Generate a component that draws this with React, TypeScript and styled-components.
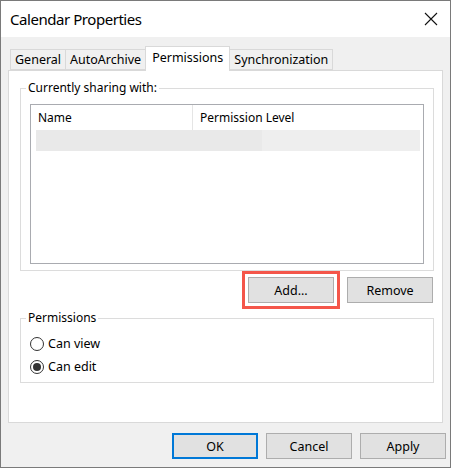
import React from "react";
import styled, { createGlobalStyle } from "styled-components";

const GlobalStyle = createGlobalStyle`
  html, body { margin: 0; padding: 0; background: #ffffff; }
  body { font-family: "Noto Sans", "Segoe UI", sans-serif; font-size: 12px; color: #000; }
  * { box-sizing: border-box; }
`;

const Window = styled.div`
  width: 451px;
  height: 468px;
  border: 1px solid #7a7a7a;
  background: #f0f0f0;
  display: flex;
  flex-direction: column;
`;

const TitleBar = styled.div`
  height: 36px;
  background: #ffffff;
  display: flex;
  align-items: center;
  justify-content: space-between;
  padding: 0 12px 0 9px;
`;

const Title = styled.div`
  font-size: 15px;
  color: #000;
  letter-spacing: -0.45px;
`;

const CloseButton = styled.div`
  width: 14px;
  height: 14px;
  display: flex;
  svg { display: block; }
`;

const Content = styled.div`
  padding: 9px 7px 0 7px;
  display: flex;
  flex-direction: column;
`;

const TabStrip = styled.div`
  display: flex;
  align-items: flex-end;
  padding-left: 2px;
  height: 24px;
  position: relative;
  z-index: 1;
`;

const Tab = styled.div<{ $active?: boolean }>`
  height: ${(p) => (p.$active ? "25px" : "21px")};
  margin-bottom: ${(p) => (p.$active ? "-1px" : "0")};
  padding: ${(p) => (p.$active ? "0 6px 3px" : "0 4px")};
  background: ${(p) => (p.$active ? "#ffffff" : "#f0f0f0")};
  border: 1px solid #d9d9d9;
  border-bottom: ${(p) => (p.$active ? "none" : "1px solid #d9d9d9")};
  margin-right: -1px;
  display: flex;
  align-items: center;
  font-size: 12.5px;
  white-space: nowrap;
`;

const Panel = styled.div`
  background: #ffffff;
  border: 1px solid #d9d9d9;
  height: 353px;
  padding: 9px 8px 0 11px;
  display: flex;
  flex-direction: column;
`;

const Group = styled.fieldset<{ $pt: number; $pb: number }>`
  margin: 0;
  border: 1px solid #dcdcdc;
  padding: ${(p) => p.$pt}px 9px ${(p) => p.$pb}px 9px;
  min-width: 0;
`;

const Legend = styled.legend`
  margin-left: -4px;
  padding: 0 2px;
  font-size: 12px;
  line-height: 16px;
`;

const ListBox = styled.div`
  height: 160px;
  border: 1px solid #a9abb0;
  background: #ffffff;
  display: flex;
  flex-direction: column;
`;

const HeaderRow = styled.div`
  display: grid;
  grid-template-columns: 162px 1fr;
  height: 25px;
  margin-right: 3px;
`;

const HeaderCell = styled.div<{ $divider?: boolean }>`
  display: flex;
  align-items: center;
  padding-left: 7px;
  border-right: ${(p) => (p.$divider ? "1px solid #e5e5e5" : "none")};
  font-size: 12px;
`;

const DataRow = styled.div`
  height: 21px;
  margin: 0 3px 0 5px;
  background: #eeeeee;
  display: flex;
`;

const BlurredName = styled.div`
  width: 226px;
  height: 100%;
  background: #e9e9e9;
`;

const ButtonRow = styled.div`
  display: flex;
  justify-content: flex-end;
  gap: 13px;
  margin: 6px 1px 7px 0;
`;

const Button = styled.button<{ $default?: boolean; $highlight?: boolean }>`
  width: 86px;
  height: 26px;
  background: #e1e1e1;
  border: ${(p) => (p.$default ? "2px solid #0078d7" : "1px solid #adadad")};
  font-family: "Noto Sans", "Segoe UI", sans-serif;
  font-size: 12.5px;
  color: #000;
  padding: 0;
  outline: ${(p) => (p.$highlight ? "3px solid #f4564a" : "none")};
  outline-offset: 3px;
`;

const RadioRow = styled.label`
  display: flex;
  align-items: center;
  gap: 4px;
  height: 23px;
  font-size: 12.5px;
`;

const RadioCircle = styled.span<{ $checked?: boolean }>`
  width: 14px;
  height: 14px;
  border-radius: 50%;
  border: 1px solid #333333;
  background: #ffffff;
  display: flex;
  align-items: center;
  justify-content: center;
  &::after {
    content: "";
    width: 8px;
    height: 8px;
    border-radius: 50%;
    background: ${(p) => (p.$checked ? "#333333" : "transparent")};
  }
`;

const Footer = styled.div`
  display: flex;
  justify-content: flex-end;
  gap: 8px;
  margin-top: 10px;
  padding-right: 4px;
`;

export default function App() {
  return (
    <>
      <GlobalStyle />
      <Window>
        <TitleBar>
          <Title>Calendar Properties</Title>
          <CloseButton>
            <svg width="14" height="14" viewBox="0 0 14 14">
              <path d="M1 1 L13 13 M13 1 L1 13" stroke="#111" strokeWidth="1.1" fill="none" />
            </svg>
          </CloseButton>
        </TitleBar>
        <Content>
          <TabStrip>
            <Tab>General</Tab>
            <Tab>AutoArchive</Tab>
            <Tab $active>Permissions</Tab>
            <Tab>Synchronization</Tab>
          </TabStrip>
          <Panel>
            <Group $pt={8} $pb={6}>
              <Legend>Currently sharing with:</Legend>
              <ListBox>
                <HeaderRow>
                  <HeaderCell $divider>Name</HeaderCell>
                  <HeaderCell>Permission Level</HeaderCell>
                </HeaderRow>
                <DataRow>
                  <BlurredName />
                </DataRow>
              </ListBox>
            </Group>
            <ButtonRow>
              <Button $highlight>Add...</Button>
              <Button>Remove</Button>
            </ButtonRow>
            <Group $pt={6} $pb={4}>
              <Legend>Permissions</Legend>
              <RadioRow>
                <RadioCircle />
                Can view
              </RadioRow>
              <RadioRow>
                <RadioCircle $checked />
                Can edit
              </RadioRow>
            </Group>
          </Panel>
        </Content>
        <Footer>
          <Button $default>OK</Button>
          <Button>Cancel</Button>
          <Button>Apply</Button>
        </Footer>
      </Window>
    </>
  );
}
